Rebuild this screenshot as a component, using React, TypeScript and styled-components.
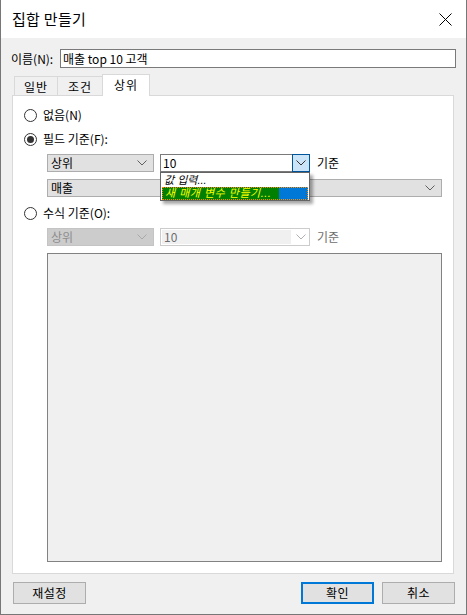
import React from "react";
import styled, { createGlobalStyle, css } from "styled-components";

const Global = createGlobalStyle`
  html, body { margin: 0; padding: 0; background: #ffffff; }
  * { box-sizing: border-box; }
  body { font-family: "Noto Sans CJK KR", "Noto Sans", sans-serif; font-size: 12px; color: #000; }
`;

const Window = styled.div`
  width: 467px;
  height: 615px;
  border: 1px solid #777777;
  border-top: none;
  background: #f0f0f0;
  display: flex;
  flex-direction: column;
  overflow: hidden;
`;

const TitleBar = styled.div`
  height: 38px;
  background: #ffffff;
  display: flex;
  align-items: center;
  justify-content: space-between;
  padding: 0 14px 0 11px;
`;

const Title = styled.div`
  font-size: 15px;
  line-height: 20px;
  margin-top: -1px;
  letter-spacing: 0.3px;
`;

const Body = styled.div`
  flex: 1;
  display: flex;
  flex-direction: column;
  padding: 11px 10px 0 10px;
`;

const NameRow = styled.div`
  display: flex;
  align-items: center;
  height: 19px;
  gap: 4px;
`;

const Label = styled.span<{ $w?: number }>`
  line-height: 16px;
  white-space: nowrap;
  ${(p) => p.$w && css`width: ${p.$w}px;`}
`;

const TextInput = styled.div`
  flex: 1;
  height: 19px;
  border: 1px solid #7a7a7a;
  background: #fff;
  padding: 0 2px;
  line-height: 16px;
  display: flex;
  align-items: center;
`;

const TabStrip = styled.div`
  display: flex;
  align-items: flex-end;
  margin: 6px 0 0 3px;
  height: 21px;
  position: relative;
  z-index: 1;
`;

const Tab = styled.div<{ $active?: boolean; $w: number }>`
  width: ${(p) => p.$w}px;
  height: ${(p) => (p.$active ? 21 : 19)}px;
  border: 1px solid #d9d9d9;
  border-bottom: none;
  margin-left: -1px;
  display: flex;
  align-items: center;
  justify-content: center;
  line-height: 16px;
  letter-spacing: 1px;
  padding-top: ${(p) => (p.$active ? 0 : 1)}px;
  background: ${(p) => (p.$active ? "#ffffff" : "#f0f0f0")};
  &:first-child { margin-left: 0; }
  ${(p) => p.$active && css`margin-bottom: -1px; height: 22px; padding-bottom: 2px;`}
`;

const Panel = styled.div`
  margin-left: 1px;
  width: 442px;
  height: 479px;
  background: #ffffff;
  border: 1px solid #d9d9d9;
  display: flex;
  flex-direction: column;
  padding: 11px 0 0 11px;
`;

const RadioRow = styled.div<{ $gap: number }>`
  display: flex;
  align-items: center;
  height: 16px;
  gap: 6px;
  margin-top: ${(p) => p.$gap}px;
`;

const RadioCircle = styled.span<{ $checked?: boolean }>`
  width: 13px;
  height: 13px;
  border-radius: 50%;
  border: 1px solid #333333;
  background: #fff;
  display: flex;
  align-items: center;
  justify-content: center;
  &::after {
    content: "";
    display: ${(p) => (p.$checked ? "block" : "none")};
    width: 7px;
    height: 7px;
    border-radius: 50%;
    background: #333333;
  }
`;

const ControlRow = styled.div<{ $gap: number }>`
  display: flex;
  align-items: center;
  margin: ${(p) => p.$gap}px 0 0 23px;
  height: 18px;
  gap: 7px;
  position: relative;
`;

const Combo = styled.div<{ $w: number; $disabled?: boolean }>`
  width: ${(p) => p.$w}px;
  height: 18px;
  border: 1px solid ${(p) => (p.$disabled ? "#c4c4c4" : "#adadad")};
  background: ${(p) => (p.$disabled ? "#cccccc" : "#e1e1e1")};
  color: ${(p) => (p.$disabled ? "#8c8c8c" : "#000")};
  display: flex;
  align-items: center;
  justify-content: space-between;
  padding: 0 6px 0 3px;
  line-height: 16px;
  margin-right: -1px;
`;

const EditCombo = styled.div<{ $disabled?: boolean }>`
  width: 150px;
  height: 18px;
  border: 1px solid ${(p) => (p.$disabled ? "#cccccc" : "#7a7a7a")};
  background: #ffffff;
  display: flex;
  align-items: stretch;
  position: relative;
`;

const EditText = styled.div<{ $disabled?: boolean }>`
  flex: 1;
  display: flex;
  align-items: center;
  padding-left: 2px;
  line-height: 16px;
  margin: ${(p) => (p.$disabled ? "1px" : "0")};
  background: ${(p) => (p.$disabled ? "#f0f0f0" : "transparent")};
  color: ${(p) => (p.$disabled ? "#6d6d6d" : "#000")};
`;

const DropButton = styled.div<{ $hot?: boolean }>`
  width: 17px;
  display: flex;
  align-items: center;
  justify-content: center;
  ${(p) =>
    p.$hot &&
    css`
      background: #cce4f7;
      margin: -1px -1px -1px 0;
      border: 1px solid #005499;
      width: 18px;
    `}
`;

const Suffix = styled.span<{ $disabled?: boolean }>`
  line-height: 16px;
  color: ${(p) => (p.$disabled ? "#6d6d6d" : "#000")};
`;

const DropList = styled.div`
  position: absolute;
  left: 113px;
  top: 18px;
  width: 150px;
  height: 29px;
  background: #ffffff;
  border: 1px solid #646464;
  box-shadow: 3px 3px 3px rgba(0, 0, 0, 0.35);
  z-index: 5;
  display: flex;
  flex-direction: column;
  padding: 0 1px;
`;

const ListItem = styled.div<{ $selected?: boolean }>`
  height: 13.5px;
  display: flex;
  align-items: center;
  font-family: "Liberation Sans", "Noto Sans CJK KR", sans-serif;
  font-style: italic;
  line-height: 12px;
  font-size: 11px;
  overflow: hidden;
  ${(p) =>
    p.$selected
      ? css`
          background: #0078d7;
          outline: 1px dotted #ff8c00;
          outline-offset: -1px;
          color: #ffff00;
        `
      : css`
          padding-left: 2px;
        `}
`;

const Highlight = styled.span`
  background: #007f00;
  height: 100%;
  display: flex;
  align-items: center;
  padding: 0 8px 0 3px;
  letter-spacing: 0.5px;
`;

const TextArea = styled.div`
  margin: 7px 0 0 23px;
  width: 395px;
  height: 309px;
  border: 1px solid #828282;
  background: #f0f0f0;
`;

const ButtonBar = styled.div`
  display: flex;
  align-items: center;
  margin-top: 8px;
  padding-left: 2px;
  padding-right: 1px;
  gap: 8px;
`;

const Button = styled.div<{ $default?: boolean }>`
  width: 73px;
  height: 22px;
  border: ${(p) => (p.$default ? "2px solid #0078d7" : "1px solid #adadad")};
  background: #e1e1e1;
  display: flex;
  align-items: center;
  justify-content: center;
  line-height: 16px;
  letter-spacing: 0.5px;
`;

const Spacer = styled.div`
  flex: 1;
`;

const Chevron = ({ color = "#606060" }: { color?: string }) => (
  <svg width="10" height="6" viewBox="0 0 10 6">
    <path d="M0.5 0.5 L5 5 L9.5 0.5" fill="none" stroke={color} strokeWidth="1" />
  </svg>
);

const CloseIcon = () => (
  <svg width="13" height="13" viewBox="0 0 13 13">
    <path d="M0.5 0.5 L12.5 12.5 M12.5 0.5 L0.5 12.5" stroke="#000" strokeWidth="1" />
  </svg>
);

export default function App() {
  return (
    <>
      <Global />
      <Window>
        <TitleBar>
          <Title>집합 만들기</Title>
          <CloseIcon />
        </TitleBar>
        <Body>
          <NameRow>
            <Label $w={45}>이름(N):</Label>
            <TextInput>매출 top 10 고객</TextInput>
          </NameRow>
          <TabStrip>
            <Tab $w={44}>일반</Tab>
            <Tab $w={46}>조건</Tab>
            <Tab $w={48} $active>상위</Tab>
          </TabStrip>
          <Panel>
            <RadioRow $gap={0}>
              <RadioCircle />
              <Label>없음(N)</Label>
            </RadioRow>
            <RadioRow $gap={8}>
              <RadioCircle $checked />
              <Label>필드 기준(F):</Label>
            </RadioRow>
            <ControlRow $gap={7}>
              <Combo $w={107}>
                <span>상위</span>
                <Chevron />
              </Combo>
              <EditCombo>
                <EditText>10</EditText>
                <DropButton $hot>
                  <Chevron color="#333" />
                </DropButton>
              </EditCombo>
              <Suffix>기준</Suffix>
              <DropList>
                <ListItem>값 입력...</ListItem>
                <ListItem $selected>
                  <Highlight>새 매개 변수 만들기...</Highlight>
                </ListItem>
              </DropList>
            </ControlRow>
            <ControlRow $gap={7}>
              <Combo $w={395}>
                <span>매출</span>
                <Chevron />
              </Combo>
            </ControlRow>
            <RadioRow $gap={8}>
              <RadioCircle />
              <Label>수식 기준(O):</Label>
            </RadioRow>
            <ControlRow $gap={7}>
              <Combo $w={107} $disabled>
                <span>상위</span>
                <Chevron color="#a8a8a8" />
              </Combo>
              <EditCombo $disabled>
                <EditText $disabled>10</EditText>
                <DropButton>
                  <Chevron color="#b0b0b0" />
                </DropButton>
              </EditCombo>
              <Suffix $disabled>기준</Suffix>
            </ControlRow>
            <TextArea />
          </Panel>
          <ButtonBar>
            <Button>재설정</Button>
            <Spacer />
            <Button $default>확인</Button>
            <Button>취소</Button>
          </ButtonBar>
        </Body>
      </Window>
    </>
  );
}
